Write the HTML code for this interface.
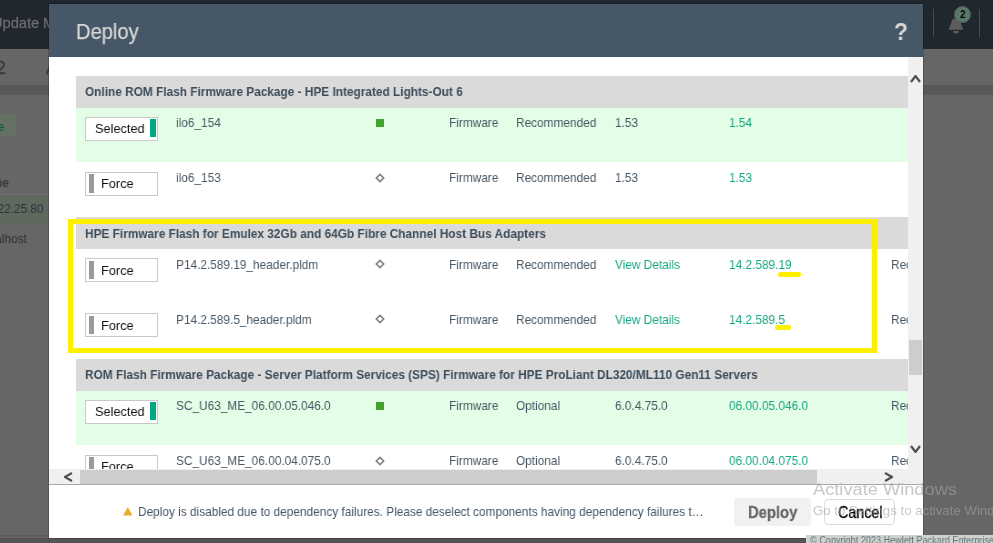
<!DOCTYPE html>
<html><head><meta charset="utf-8">
<style>
*{margin:0;padding:0;box-sizing:border-box}
html,body{width:993px;height:543px;overflow:hidden;background:#666;font-family:"Liberation Sans",sans-serif}
.a{position:absolute;white-space:nowrap}
.t,.lbl,.grp span,.s{will-change:transform}
.s{transform-origin:0 0;transform:scaleX(0.911)}
.grp{position:absolute;left:27px;width:900px;height:31.9px;background:#dadada}
.grp span{position:absolute;left:9px;top:9.60px;line-height:14px;font-size:13px;font-weight:bold;color:#3d4d5b;white-space:nowrap;transform-origin:0 0;transform:scaleX(0.911)}
.row{position:absolute;left:27px;width:900px;height:54.8px;background:#fff}
.row.sel{background:#e3fde6}
.t{position:absolute;top:8.90px;line-height:14px;font-size:13px;color:#475765;white-space:nowrap;transform-origin:0 0;transform:scaleX(0.911)}
.sel .t{top:7.90px}
.g{color:#16a883}
.sq{position:absolute;left:300px;top:11.2px;width:7.8px;height:7.8px;background:#44a12c}
.dia{position:absolute;left:298.8px;top:10.2px;width:10px;height:10px}
.btn{position:absolute;left:9px;top:9.2px;width:73px;height:24px;background:#fff;border:1px solid #c9c9c9}
.lbl{position:absolute;top:3.62px;line-height:16px;font-size:13.5px;color:#111;white-space:nowrap;transform-origin:0 0;transform:scaleX(0.945)}
.bar{position:absolute;width:5.5px;height:18.2px}
</style></head><body>
<div class="a" style="left:0;top:0;width:993px;height:49px;background:#20272e"></div>
<div class="a" style="will-change:transform;left:-7.8px;top:15.34px;font-size:14.6px;line-height:16px;color:#6b6b6b;-webkit-text-stroke:0.3px #6b6b6b">Update Manager</div>
<div class="a" style="left:933px;top:9px;width:1.3px;height:27.5px;background:#474d54"></div>
<div class="a" style="left:978.8px;top:9px;width:1.3px;height:27.5px;background:#474d54"></div>
<svg class="a" style="left:946px;top:17px" width="20" height="18" viewBox="0 0 20 18"><path d="M2.6 12.8 L5.2 6 Q6.2 1.2 10 1 Q13.8 1.2 14.8 6 L17.4 12.8 Z" fill="#5c5c5c"/><path d="M7 14.1 L13 14.1 Q13 16.6 10 16.6 Q7 16.6 7 14.1 Z" fill="#5c5c5c"/></svg>
<div class="a" style="left:953.9px;top:5.5px;width:17.2px;height:17.2px;border-radius:50%;background:#5a776a;border:1px solid #4d6459"></div>
<div class="a s" style="will-change:transform;left:960.1px;top:6.96px;font-size:10.8px;line-height:14px;font-weight:bold;color:#000">2</div>

<div class="a" style="will-change:transform;left:-4px;top:59.14px;font-size:17.5px;line-height:18px;color:#3e3e3e;-webkit-text-stroke:0.6px #3e3e3e">2</div>
<div class="a" style="will-change:transform;left:45.5px;top:59.14px;font-size:17.5px;line-height:18px;color:#3e3e3e;-webkit-text-stroke:0.6px #3e3e3e">A</div>
<div class="a" style="left:0;top:85px;width:993px;height:10px;background:#585858"></div>
<div class="a" style="left:-20px;top:114px;width:36px;height:22px;border-radius:3px;background:#657163"></div>
<div class="a" style="will-change:transform;left:-3px;top:119.50px;font-size:13px;line-height:14px;font-weight:bold;color:#165a36">e</div>
<div class="a s" style="will-change:transform;left:-5.3px;top:175.50px;font-size:13px;line-height:14px;font-weight:bold;color:#3a3a3a">ne</div>
<div class="a" style="left:0;top:194px;width:49px;height:0;border-top:1px dotted #777"></div>
<div class="a" style="left:0;top:195px;width:49px;height:30px;background:#5f6a5f"></div>
<div class="a s" style="will-change:transform;left:-9.4px;top:201.90px;font-size:13px;line-height:14px;color:#2e343a">122.25.80</div>
<div class="a s" style="will-change:transform;left:-19.8px;top:231.50px;font-size:13px;line-height:14px;color:#2f2f2f">localhost</div>
<div class="a" style="left:0;top:535px;width:806px;height:1px;background:#5a5a5a"></div>
<div class="a" style="left:0;top:536px;width:806px;height:2px;background:#626262"></div>
<div class="a" style="left:0;top:538px;width:806px;height:5px;background:#545454"></div>

<div class="a" style="left:49px;top:4px;width:874px;height:534px;background:#fff;overflow:hidden;box-shadow:0 0 0 1px rgba(0,0,0,0.18)">
 <div class="a" style="left:0;top:0;width:874px;height:53px;background:#465767"></div>
 <div class="a" style="left:26.6px;top:14.58px;font-size:22px;line-height:26px;color:#d7d7d7;will-change:transform;transform-origin:0 0;transform:scaleX(0.915);-webkit-text-stroke:0.25px #d7d7d7">Deploy</div>
 <div class="a" style="left:845.3px;top:14.68px;font-size:24px;line-height:26px;font-weight:bold;color:#d7d7d7;will-change:transform;transform-origin:0 0;transform:scaleX(0.95)">?</div>
 <div class="a" style="left:0;top:53px;width:859px;height:412px;overflow:hidden">
<div class="grp" style="top:18.8px"><span>Online ROM Flash Firmware Package - HPE Integrated Lights-Out 6</span></div>
<div class="row sel" style="top:50.7px"><div class="btn"><span class="lbl" style="left:9.4px">Selected</span><span class="bar" style="left:64px;top:1.2px;background:#01a982"></span></div><span class="t" style="left:99.6px">ilo6_154</span><span class="sq"></span><span class="t" style="left:372.6px">Firmware</span><span class="t" style="left:440px">Recommended</span><span class="t" style="left:538.6px">1.53</span><span class="t g" style="left:652.6px">1.54</span></div>
<div class="row" style="top:105.5px"><div class="btn"><span class="bar" style="left:2.8px;top:1.8px;background:#9a9a9a"></span><span class="lbl" style="left:15px">Force</span></div><span class="t" style="left:99.6px">ilo6_153</span><svg class="dia" viewBox="0 0 10 10"><path d="M5 1.35 L8.65 5 L5 8.65 L1.35 5 Z" fill="none" stroke="#838383" stroke-width="1.7"/></svg><span class="t" style="left:372.6px">Firmware</span><span class="t" style="left:440px">Recommended</span><span class="t" style="left:538.6px">1.53</span><span class="t g" style="left:652.6px">1.53</span></div>
<div class="grp" style="top:160.3px"><span>HPE Firmware Flash for Emulex 32Gb and 64Gb Fibre Channel Host Bus Adapters</span></div>
<div class="row" style="top:192.2px"><div class="btn"><span class="bar" style="left:2.8px;top:1.8px;background:#9a9a9a"></span><span class="lbl" style="left:15px">Force</span></div><span class="t" style="left:99.6px">P14.2.589.19_header.pldm</span><svg class="dia" viewBox="0 0 10 10"><path d="M5 1.35 L8.65 5 L5 8.65 L1.35 5 Z" fill="none" stroke="#838383" stroke-width="1.7"/></svg><span class="t" style="left:372.6px">Firmware</span><span class="t" style="left:440px">Recommended</span><span class="t g" style="left:538.6px">View Details</span><span class="t g" style="left:652.6px">14.2.589.19</span><span class="t" style="left:815px">Recommended</span></div>
<div class="row" style="top:247.0px"><div class="btn"><span class="bar" style="left:2.8px;top:1.8px;background:#9a9a9a"></span><span class="lbl" style="left:15px">Force</span></div><span class="t" style="left:99.6px">P14.2.589.5_header.pldm</span><svg class="dia" viewBox="0 0 10 10"><path d="M5 1.35 L8.65 5 L5 8.65 L1.35 5 Z" fill="none" stroke="#838383" stroke-width="1.7"/></svg><span class="t" style="left:372.6px">Firmware</span><span class="t" style="left:440px">Recommended</span><span class="t g" style="left:538.6px">View Details</span><span class="t g" style="left:652.6px">14.2.589.5</span><span class="t" style="left:815px">Recommended</span></div>
<div class="grp" style="top:301.8px"><span>ROM Flash Firmware Package - Server Platform Services (SPS) Firmware for HPE ProLiant DL320/ML110 Gen11 Servers</span></div>
<div class="row sel" style="top:333.7px"><div class="btn"><span class="lbl" style="left:9.4px">Selected</span><span class="bar" style="left:64px;top:1.2px;background:#01a982"></span></div><span class="t" style="left:99.6px">SC_U63_ME_06.00.05.046.0</span><span class="sq"></span><span class="t" style="left:372.6px">Firmware</span><span class="t" style="left:440px">Optional</span><span class="t" style="left:538.6px">6.0.4.75.0</span><span class="t g" style="left:652.6px">06.00.05.046.0</span><span class="t" style="left:815px">Recommended</span></div>
<div class="row" style="top:388.5px"><div class="btn"><span class="bar" style="left:2.8px;top:1.8px;background:#9a9a9a"></span><span class="lbl" style="left:15px">Force</span></div><span class="t" style="left:99.6px">SC_U63_ME_06.00.04.075.0</span><svg class="dia" viewBox="0 0 10 10"><path d="M5 1.35 L8.65 5 L5 8.65 L1.35 5 Z" fill="none" stroke="#838383" stroke-width="1.7"/></svg><span class="t" style="left:372.6px">Firmware</span><span class="t" style="left:440px">Optional</span><span class="t" style="left:538.6px">6.0.4.75.0</span><span class="t g" style="left:652.6px">06.00.04.075.0</span><span class="t" style="left:815px">Recommended</span></div>
 </div>
</div>
<div class="a" style="left:908px;top:57px;width:15px;height:427px;background:#f0f0f0"></div>
<div class="a" style="left:909px;top:340px;width:13px;height:35px;background:#cdcdcd"></div>
<svg class="a" style="left:910px;top:75px" width="11" height="8" viewBox="0 0 11 8"><path d="M1 7 L5.5 1 L10 7" fill="none" stroke="#505050" stroke-width="2.2"/></svg>
<svg class="a" style="left:910px;top:445px" width="11" height="8" viewBox="0 0 11 8"><path d="M1 1 L5.5 7 L10 1" fill="none" stroke="#505050" stroke-width="2.2"/></svg>
<div class="a" style="left:49px;top:469px;width:859px;height:15px;background:#f0f0f0"></div>
<div class="a" style="left:80px;top:469.5px;width:737px;height:14px;background:#cdcdcd"></div>
<svg class="a" style="left:64px;top:471.5px" width="9" height="10" viewBox="0 0 9 10"><path d="M8 1 L1 5.0 L8 9" fill="none" stroke="#505050" stroke-width="2.2"/></svg>
<svg class="a" style="left:884px;top:471.5px" width="9" height="10" viewBox="0 0 9 10"><path d="M1 1 L8 5.0 L1 9" fill="none" stroke="#505050" stroke-width="2.2"/></svg>
<div class="a" style="left:49px;top:484px;width:874px;height:1px;background:#a9a9a9"></div>

<svg class="a" style="left:122.6px;top:507.3px" width="9.6" height="8.6" viewBox="0 0 10 9"><path d="M5 0 L10 9 L0 9 Z" fill="#f2ac2b"/></svg>
<div class="a s" style="will-change:transform;left:138.2px;top:505.30px;font-size:13px;line-height:14px;color:#46566a">Deploy is disabled due to dependency failures. Please deselect components having dependency failures t…</div>
<div class="a" style="left:734.3px;top:497.9px;width:76.4px;height:27.8px;border-radius:4px;background:#f1f1f1"></div>
<div class="a" style="will-change:transform;left:747.5px;top:502.71px;font-size:17px;line-height:20px;font-weight:bold;color:#686868;-webkit-text-stroke:0.3px #686868;transform-origin:0 0;transform:scaleX(0.87)">Deploy</div>
<div class="a" style="left:824px;top:499px;width:71.4px;height:25.8px;border-radius:4px;background:#fff;border:1px solid #dadada"></div>
<div class="a" style="will-change:transform;left:837.5px;top:502.71px;font-size:17px;line-height:20px;color:#000;-webkit-text-stroke:0.35px #000;transform-origin:0 0;transform:scaleX(0.84)">Cancel</div>

<div class="a" style="left:68px;top:219px;width:809px;height:134px;border:5px solid #fdef00"></div>
<div class="a" style="left:778px;top:272px;width:23px;height:4.6px;border-radius:2.3px;background:#fdef00"></div>
<div class="a" style="left:775px;top:325px;width:15.7px;height:4.6px;border-radius:2.3px;background:#fdef00"></div>

<div class="a" style="will-change:transform;left:812.5px;top:480.46px;font-size:16px;line-height:20px;color:rgba(164,164,164,0.61);transform-origin:0 0;transform:scaleX(1.14)">Activate Windows</div>
<div class="a" style="will-change:transform;left:812.5px;top:502.63px;font-size:12.6px;line-height:16px;color:rgba(164,164,164,0.61);transform-origin:0 0;transform:scaleX(1.05)">Go to Settings to activate Windows.</div>

<div class="a" style="left:806px;top:535px;width:187px;height:8px;background:#d0d0d0;overflow:hidden">
 <div class="a s" style="will-change:transform;left:3.8px;top:0.43px;font-size:10px;line-height:12px;color:#5b7876">© Copyright 2023 Hewlett Packard Enterprise Development LP</div>
</div>
</body></html>
